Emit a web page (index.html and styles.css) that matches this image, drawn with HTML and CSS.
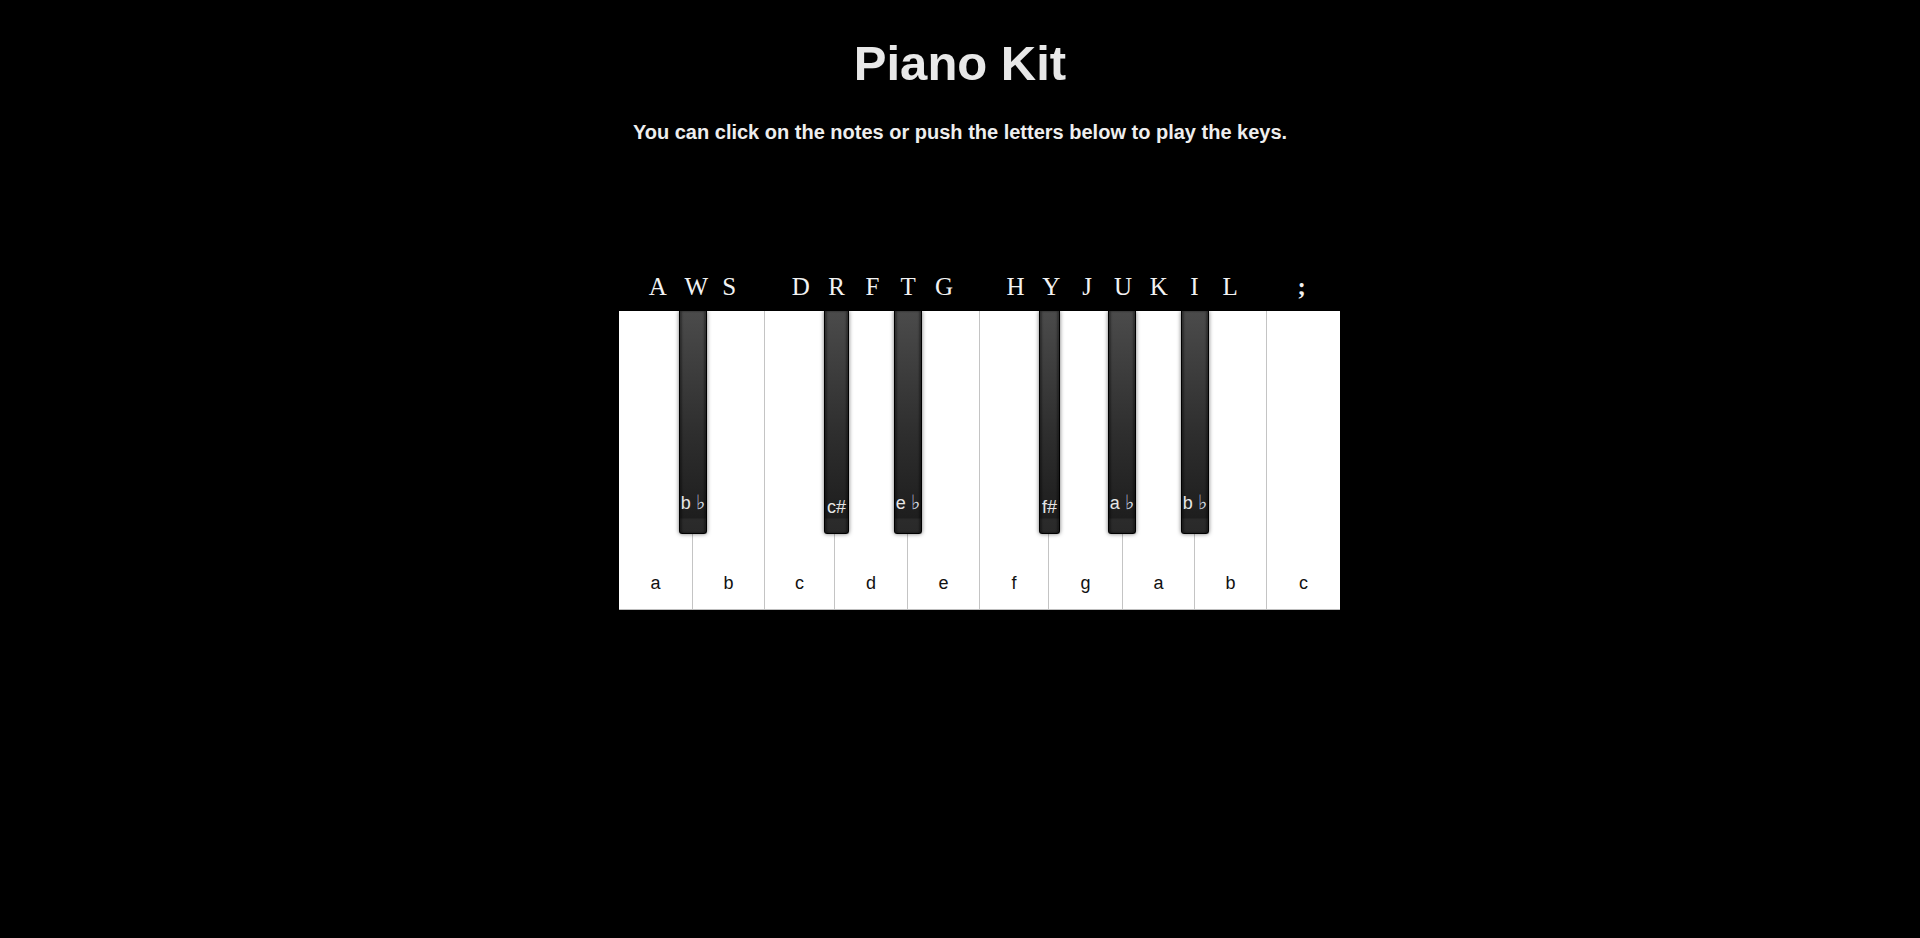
FILE: index.html
```html
<!DOCTYPE html>
<html lang="en">
<head>
<meta charset="utf-8">
<title>Piano Kit</title>
<link rel="stylesheet" href="styles.css">
</head>
<body>
  <h1 class="title">Piano Kit</h1>
  <p class="subtitle">You can click on the notes or push the letters below to play the keys.</p>

  <div class="kit">
    <div class="letters">
      <span class="ch">A</span><span class="ch">W</span><span class="ch">S</span>
      <span class="ch grp">D</span><span class="ch">R</span><span class="ch">F</span><span class="ch">T</span><span class="ch">G</span>
      <span class="ch grp">H</span><span class="ch">Y</span><span class="ch">J</span><span class="ch">U</span><span class="ch">K</span><span class="ch">I</span><span class="ch">L</span>
      <span class="ch grp semi">;</span>
    </div>
    <div class="piano">
      <div class="wk"><span class="wl">a</span></div>
      <div class="wk"><span class="wl">b</span></div>
      <div class="wk"><span class="wl">c</span></div>
      <div class="wk"><span class="wl">d</span></div>
      <div class="wk"><span class="wl">e</span></div>
      <div class="wk"><span class="wl">f</span></div>
      <div class="wk"><span class="wl">g</span></div>
      <div class="wk"><span class="wl">a</span></div>
      <div class="wk"><span class="wl">b</span></div>
      <div class="wk"><span class="wl">c</span></div>

      <div class="bk bk1 flat"><span class="bl">b <span class="acc">♭</span></span></div>
      <div class="bk bk2"><span class="bl">c#</span></div>
      <div class="bk bk3 flat"><span class="bl">e <span class="acc">♭</span></span></div>
      <div class="bk bk4"><span class="bl">f#</span></div>
      <div class="bk bk5 flat"><span class="bl">a <span class="acc">♭</span></span></div>
      <div class="bk bk6 flat"><span class="bl">b <span class="acc">♭</span></span></div>
    </div>
  </div>
</body>
</html>
```

FILE: styles.css
```css
html, body {
  margin: 0;
  padding: 0;
  background: #000;
}

body {
  font-family: "Liberation Sans", Arial, sans-serif;
  color: #e8e8e8;
}

.title {
  margin: 35px 0 0;
  font-size: 49px;
  line-height: 56px;
  font-weight: bold;
  text-align: center;
  color: #e8e8e8;
}

.subtitle {
  margin: 30px 0 0;
  font-size: 20px;
  line-height: 23px;
  font-weight: bold;
  text-align: center;
  color: #eeeeee;
}

.kit {
  width: 721px;
  margin: 127px auto 0;
  padding-left: 39px;
}

.letters {
  display: flex;
  gap: 17.9px;
  padding-left: 29.7px;
  font-family: "Liberation Serif", "Times New Roman", serif;
  font-size: 25px;
  line-height: 32px;
  color: #f2f2f2;
}

.ch {
  width: 17.9px;
  text-align: center;
  flex: none;
}

.ch.grp {
  margin-left: 35.8px;
}

.ch.semi {
  font-weight: bold;
}

.piano {
  position: relative;
  margin-top: 8px;
  display: grid;
  grid-template-columns: 73px 72px 70px 73px 72px 69px 74px 72px 72px 74px;
  height: 299px;
  background: #fff;
  border-bottom: 1px solid #bdbdbd;
  box-sizing: border-box;
}

.wk {
  display: flex;
  align-items: flex-end;
  justify-content: center;
  background: #fff;
  border-left: 1px solid #c4c4c4;
  padding-bottom: 15px;
}

.wk:first-child {
  border-left: none;
}

.wl {
  font-size: 18px;
  line-height: 21px;
  color: #111;
}

.bk {
  position: absolute;
  top: 0;
  height: 223px;
  box-sizing: border-box;
  border: 1px solid #000;
  border-top: none;
  border-radius: 0 0 3px 3px;
  background: linear-gradient(to bottom, #4b4b4b 0%, #2e2e2e 55%, #1e1e1e 93%, #2b2b2b 94%, #292929 100%);
  box-shadow:
    inset 2px 0 2px rgba(0, 0, 0, 0.35),
    inset -2px 0 2px rgba(0, 0, 0, 0.35),
    0 0 4px rgba(0, 0, 0, 0.55);
  display: flex;
  align-items: flex-end;
  justify-content: center;
  padding-bottom: 15px;
}

.bk.flat {
  padding-bottom: 19px;
}

.bl {
  font-size: 18px;
  line-height: 21px;
  color: #e6e6e6;
  white-space: nowrap;
}

.acc {
  font-family: "DejaVu Sans", sans-serif;
  font-size: 20px;
  color: #d0d8e0;
}

.bk1 { left: 60px; width: 28px; }
.bk2 { left: 205px; width: 25px; }
.bk3 { left: 275px; width: 28px; }
.bk4 { left: 420px; width: 21px; }
.bk5 { left: 489px; width: 28px; }
.bk6 { left: 562px; width: 28px; }
```
